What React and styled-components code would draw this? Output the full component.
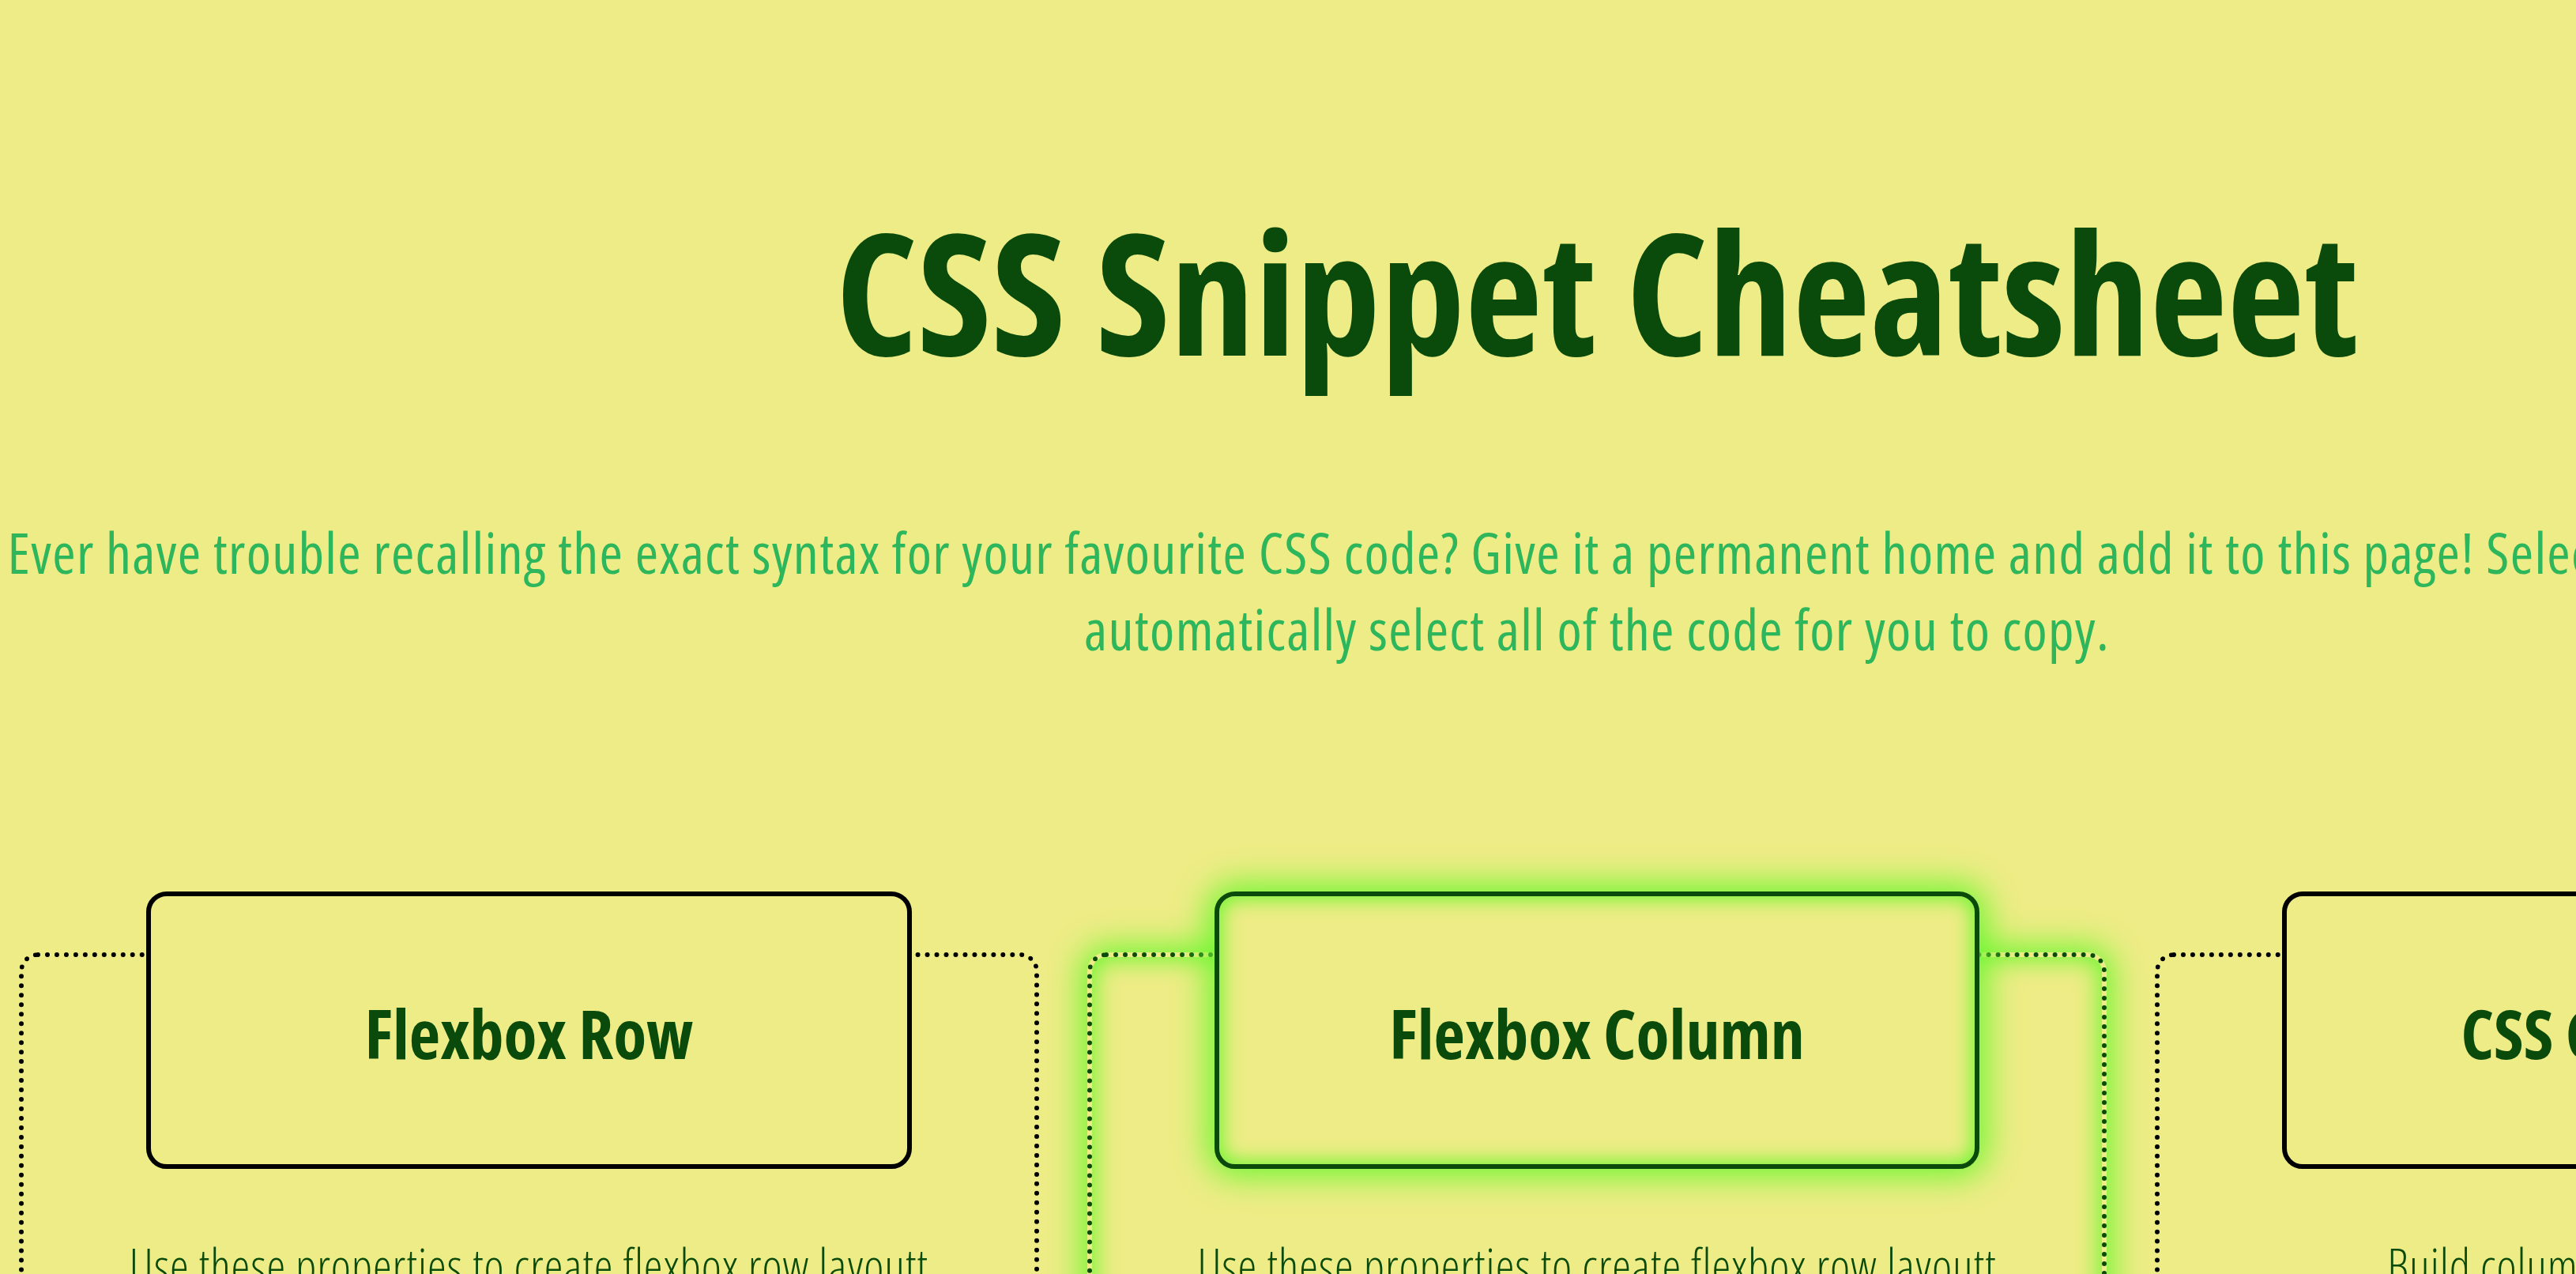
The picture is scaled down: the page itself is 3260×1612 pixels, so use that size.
import React from "react";
import styled, { createGlobalStyle, css } from "styled-components";

const GlobalStyle = createGlobalStyle`
  html, body {
    margin: 0;
    padding: 0;
    overflow: hidden;
    background: #eeec86;
  }
  body {
    font-family: "Open Sans", "Noto Sans", sans-serif;
    font-stretch: 75%;
  }
`;

const Page = styled.main`
  width: 4042px;
  padding: 221px 0 200px;
  box-sizing: border-box;
  text-align: center;
`;

const Title = styled.h1`
  margin: 0;
  font-size: 214px;
  font-weight: 700;
  font-stretch: 75%;
  line-height: normal;
  color: #0a4b0c;
`;

const Intro = styled.p`
  margin: 137px 0 0;
  font-size: 71px;
  font-weight: 400;
  font-stretch: 75%;
  letter-spacing: 1.3px;
  line-height: 97px;
  color: #2db65c;
`;

const Grid = styled.section`
  display: grid;
  grid-template-columns: repeat(3, 1fr);
  gap: 61px;
  padding: 0 24px;
  margin-top: 361px;
`;

const glow = "rgb(112, 246, 50)";

const Card = styled.article`
  display: flex;
  flex-direction: column;
  padding: 0 155px 160px;
  border: 6px dotted ${p => (p.$active ? "#0a4b0c" : "#000")};
  border-radius: 24px;
  background: #eeec86;
  ${p =>
    p.$active &&
    css`
      box-shadow: 0 0 40px 8px ${glow}, inset 0 0 30px 4px ${glow};
    `}
`;

const CardHead = styled.header`
  display: flex;
  align-items: center;
  justify-content: center;
  box-sizing: border-box;
  height: 351px;
  margin-top: -83px;
  padding-top: 6px;
  border: 6px solid ${p => (p.$active ? "#0a4b0c" : "#000")};
  border-radius: 26px;
  background: #eeec86;
  ${p =>
    p.$active &&
    css`
      box-shadow: 0 0 42px 10px ${glow}, inset 0 0 24px 4px ${glow};
    `}
`;

const CardTitle = styled.h2`
  margin: 0;
  font-size: 86px;
  font-weight: 700;
  font-stretch: 75%;
  line-height: normal;
  color: #0a4b0c;
  white-space: nowrap;
`;

const CardText = styled.p`
  margin: 81px -120px 0;
  font-size: 60px;
  font-weight: 300;
  font-stretch: 75%;
  letter-spacing: 0.9px;
  line-height: normal;
  color: #0a4b0c;
`;

const snippets = [
  {
    title: "Flexbox Row",
    text: "Use these properties to create flexbox row layoutt",
  },
  {
    title: "Flexbox Column",
    text: "Use these properties to create flexbox row layoutt",
    active: true,
  },
  {
    title: "CSS Grid Layout",
    text: "Build column layouts with CSS grid",
  },
];

export default function App() {
  return (
    <>
      <GlobalStyle />
      <Page>
        <Title>CSS Snippet Cheatsheet</Title>
        <Intro>
          Ever have trouble recalling the exact syntax for your favourite CSS
          code? Give it a permanent home and add it to this page! Select any
          code snippet, and it will automatically select all of the code for
          you to copy.
        </Intro>
        <Grid>
          {snippets.map(s => (
            <Card key={s.title} $active={s.active}>
              <CardHead $active={s.active}>
                <CardTitle>{s.title}</CardTitle>
              </CardHead>
              <CardText>{s.text}</CardText>
            </Card>
          ))}
        </Grid>
      </Page>
    </>
  );
}
